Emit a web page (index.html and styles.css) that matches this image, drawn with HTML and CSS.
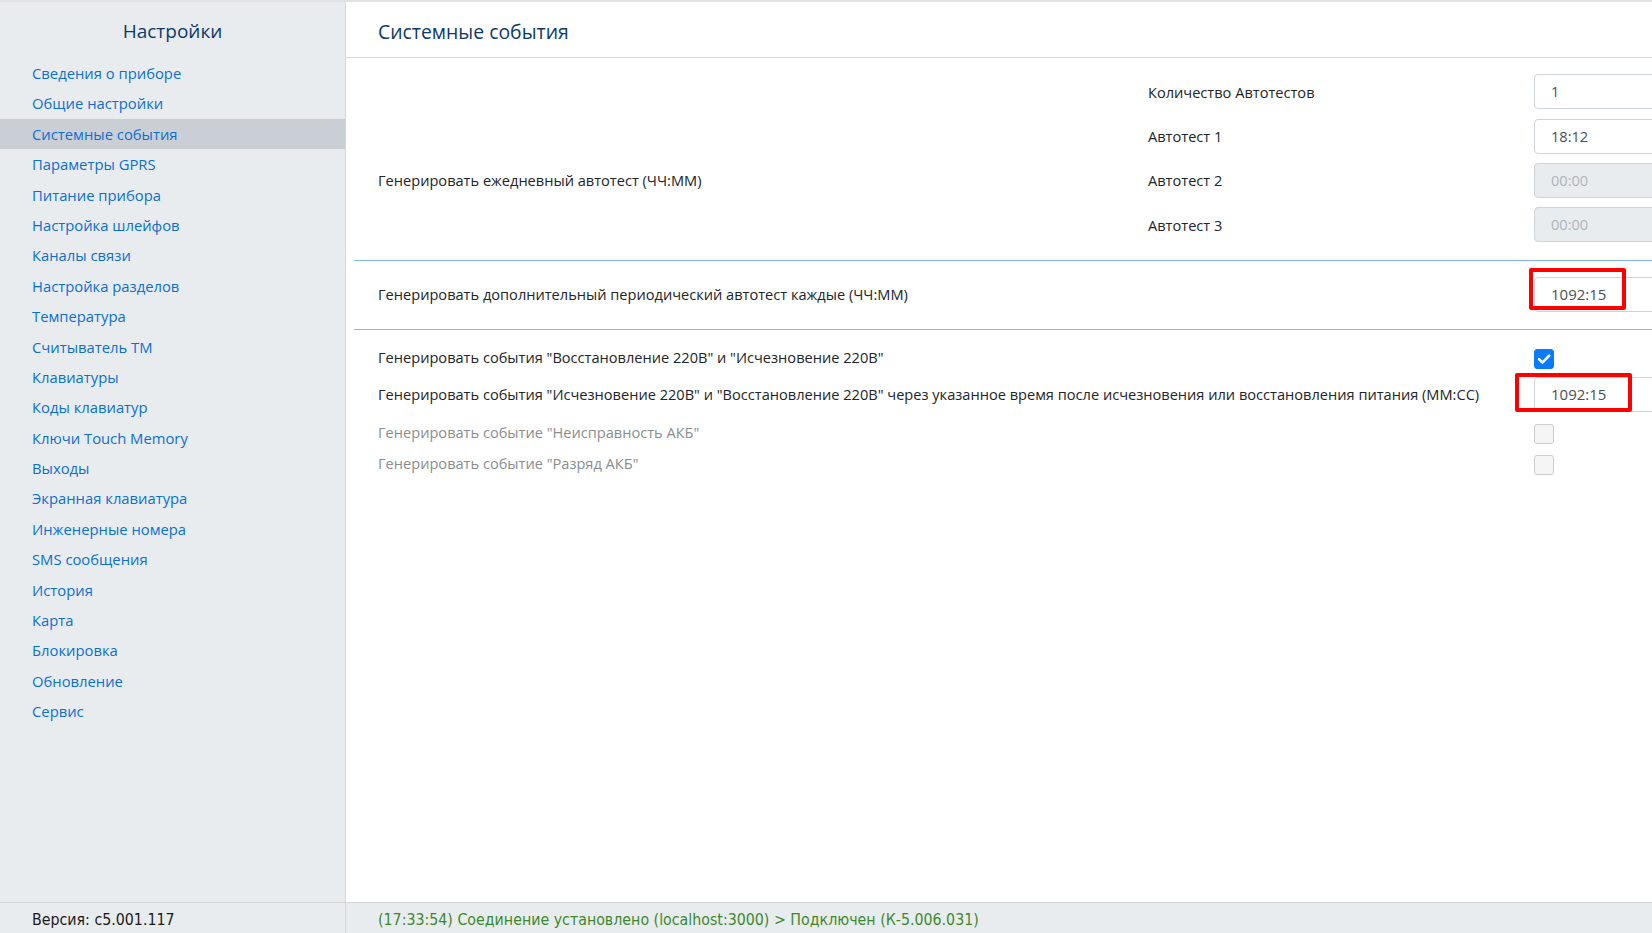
FILE: index.html
```html
<!DOCTYPE html>
<html lang="ru">
<head>
<meta charset="utf-8">
<title>Настройки</title>
<link rel="stylesheet" href="styles.css">
</head>
<body>
<div class="app">
  <div class="top">
    <aside class="sidebar">
      <div class="side-title">Настройки</div>
      <nav class="menu">
        <a class="menu-item">Сведения о приборе</a>
        <a class="menu-item">Общие настройки</a>
        <a class="menu-item active">Системные события</a>
        <a class="menu-item">Параметры GPRS</a>
        <a class="menu-item">Питание прибора</a>
        <a class="menu-item">Настройка шлейфов</a>
        <a class="menu-item">Каналы связи</a>
        <a class="menu-item">Настройка разделов</a>
        <a class="menu-item">Температура</a>
        <a class="menu-item">Считыватель ТМ</a>
        <a class="menu-item">Клавиатуры</a>
        <a class="menu-item">Коды клавиатур</a>
        <a class="menu-item">Ключи Touch Memory</a>
        <a class="menu-item">Выходы</a>
        <a class="menu-item">Экранная клавиатура</a>
        <a class="menu-item">Инженерные номера</a>
        <a class="menu-item">SMS сообщения</a>
        <a class="menu-item">История</a>
        <a class="menu-item">Карта</a>
        <a class="menu-item">Блокировка</a>
        <a class="menu-item">Обновление</a>
        <a class="menu-item">Сервис</a>
      </nav>
    </aside>
    <main class="main">
      <header class="main-header">Системные события</header>
      <div class="content">
        <section class="sec sec-auto">
          <div class="lbl auto-main">Генерировать ежедневный автотест (ЧЧ:ММ)</div>
          <div class="lbl sub r1">Количество Автотестов</div>
          <div class="field r1"><div class="inp">1</div></div>
          <div class="lbl sub r2">Автотест 1</div>
          <div class="field r2"><div class="inp">18:12</div></div>
          <div class="lbl sub r3">Автотест 2</div>
          <div class="field r3"><div class="inp disabled">00:00</div></div>
          <div class="lbl sub r4">Автотест 3</div>
          <div class="field r4"><div class="inp disabled">00:00</div></div>
        </section>
        <section class="sec sec-period">
          <div class="row">
            <div class="lbl">Генерировать дополнительный периодический автотест каждые (ЧЧ:ММ)</div>
            <div class="field"><div class="inp big">1092:15</div><span class="mark mark1"></span></div>
          </div>
        </section>
        <section class="sec sec-events">
          <div class="row row-cb row-cb1">
            <div class="lbl">Генерировать события "Восстановление 220В" и "Исчезновение 220В"</div>
            <div class="field"><span class="cb checked"><svg viewBox="0 0 20 20" width="20" height="20"><path d="M5 10.2l3.4 3.4L15.2 6.6" fill="none" stroke="#fff" stroke-width="2.6" stroke-linecap="round" stroke-linejoin="round"/></svg></span></div>
          </div>
          <div class="row row-inp">
            <div class="lbl">Генерировать события "Исчезновение 220В" и "Восстановление 220В" через указанное время после исчезновения или восстановления питания (ММ:СС)</div>
            <div class="field"><div class="inp big">1092:15</div><span class="mark mark2"></span></div>
          </div>
          <div class="row row-cb row-cb3">
            <div class="lbl muted">Генерировать событие "Неисправность АКБ"</div>
            <div class="field"><span class="cb"></span></div>
          </div>
          <div class="row row-cb row-cb4">
            <div class="lbl muted">Генерировать событие "Разряд АКБ"</div>
            <div class="field"><span class="cb"></span></div>
          </div>
        </section>
      </div>
    </main>
  </div>
  <footer class="footer">
    <div class="foot-left">Версия: c5.001.117</div>
    <div class="foot-right">(17:33:54) Соединение установлено (localhost:3000) &gt; Подключен (К-5.006.031)</div>
  </footer>
</div>
</body>
</html>
```

FILE: styles.css
```css
* { box-sizing: border-box; }
html, body { margin: 0; padding: 0; height: 100%; }
body {
  font-family: "Open Sans", "Noto Sans", sans-serif;
  font-size: 14.6px;
  color: #212529;
  background: #fff;
  overflow: hidden;
}
.app {
  height: 100vh;
  display: flex;
  flex-direction: column;
  border-top: 2px solid #e2e2e2;
}
.top {
  flex: 1;
  display: flex;
  min-height: 0;
}
.sidebar {
  width: 346px;
  flex: none;
  background: #e9ecef;
  border-right: 1px solid #d2d5d9;
}
.side-title {
  padding-top: 16px;
  height: 56px;
  line-height: 26px;
  text-align: center;
  font-size: 19px;
  font-weight: 500;
  color: #0c3a69;
}
.menu { display: flex; flex-direction: column; }
.menu-item {
  height: 30.4px;
  line-height: 30.4px;
  padding-left: 32px;
  color: #0a6fd8;
  font-size: 14.8px;
  cursor: pointer;
  white-space: nowrap;
}
.menu-item.active { background: #cacfd6; }
.main {
  flex: 1;
  min-width: 0;
  overflow: hidden;
}
.main-header {
  height: 56px;
  border-bottom: 1px solid #d5d8dc;
  padding-left: 32px;
  line-height: 60px;
  font-size: 19.4px;
  color: #0c3a69;
}
.content { margin-left: 8px; }
.sec { border-bottom: 1px solid #80bcf3; padding-left: 24px; }
.sec-auto {
  display: grid;
  grid-template-columns: 770px 386px 240px;
  grid-template-rows: repeat(4, 35px);
  row-gap: 9.33px;
  padding-top: 16.3px;
  padding-bottom: 17.7px;
  align-items: center;
}
.auto-main { grid-column: 1; grid-row: 3; }
.sub { grid-column: 2; }
.field { grid-column: 3; position: relative; }
.r1 { grid-row: 1; }
.r2 { grid-row: 2; }
.r3 { grid-row: 3; }
.r4 { grid-row: 4; }
.row {
  display: grid;
  grid-template-columns: 1156px 240px;
  grid-template-rows: 100%;
  align-items: center;
}
.row .field { grid-column: 2; }
.sec-period { padding-top: 16px; padding-bottom: 17px; }
.sec-events { border-bottom: none; padding-top: 18.7px; }
.row-cb1 { height: 20px; }
.row-inp { height: 35px; margin-top: 8.3px; }
.row-cb3 { height: 20px; margin-top: 11.7px; }
.row-cb4 { height: 20px; margin-top: 11px; }
.row-cb .lbl { line-height: 20px; margin-top: -4px; }
.lbl { white-space: nowrap; }
.muted { color: #8a8d90; }
.inp {
  height: 35px;
  width: 240px;
  border: 1px solid #ced4da;
  border-radius: 4px;
  padding-left: 16px;
  line-height: 33px;
  font-size: 14.6px;
  color: #495057;
  background: #fff;
}
.inp.big { font-size: 15px; color: #4a4f55; }
.inp.disabled { background: #e9ecef; color: #b0b4b8; }
.cb {
  display: block;
  width: 20px;
  height: 20px;
  border-radius: 3px;
  border: 1px solid #cdcdcd;
  background: #f5f5f5;
}
.cb.checked { background: #0a7bff; border-color: #0a7bff; }
.cb svg { display: block; margin: -1px; }
.mark {
  position: absolute;
  border: 4px solid #ff0000;
  border-radius: 2px;
  pointer-events: none;
}
.mark1 { left: -5px; top: -9px; width: 97px; height: 42.5px; }
.mark2 { left: -19.3px; top: -4.3px; width: 117px; height: 39.3px; }
.footer {
  height: 31px;
  flex: none;
  display: flex;
  background: #e9ecef;
  border-top: 1px solid #d2d5d9;
  font-family: "Liberation Sans Narrow", "DejaVu Sans Condensed", Roboto, sans-serif;
  font-stretch: condensed;
  font-size: 15.8px;
  line-height: 30px;
  padding-top: 2px;
}
.foot-left {
  width: 346px;
  flex: none;
  border-right: 1px solid #d2d5d9;
  margin-top: -2px;
  padding-top: 2px;
  padding-left: 32px;
  color: #1b1b1b;
}
.foot-right { padding-left: 32px; color: #3c8a2c; }
```
